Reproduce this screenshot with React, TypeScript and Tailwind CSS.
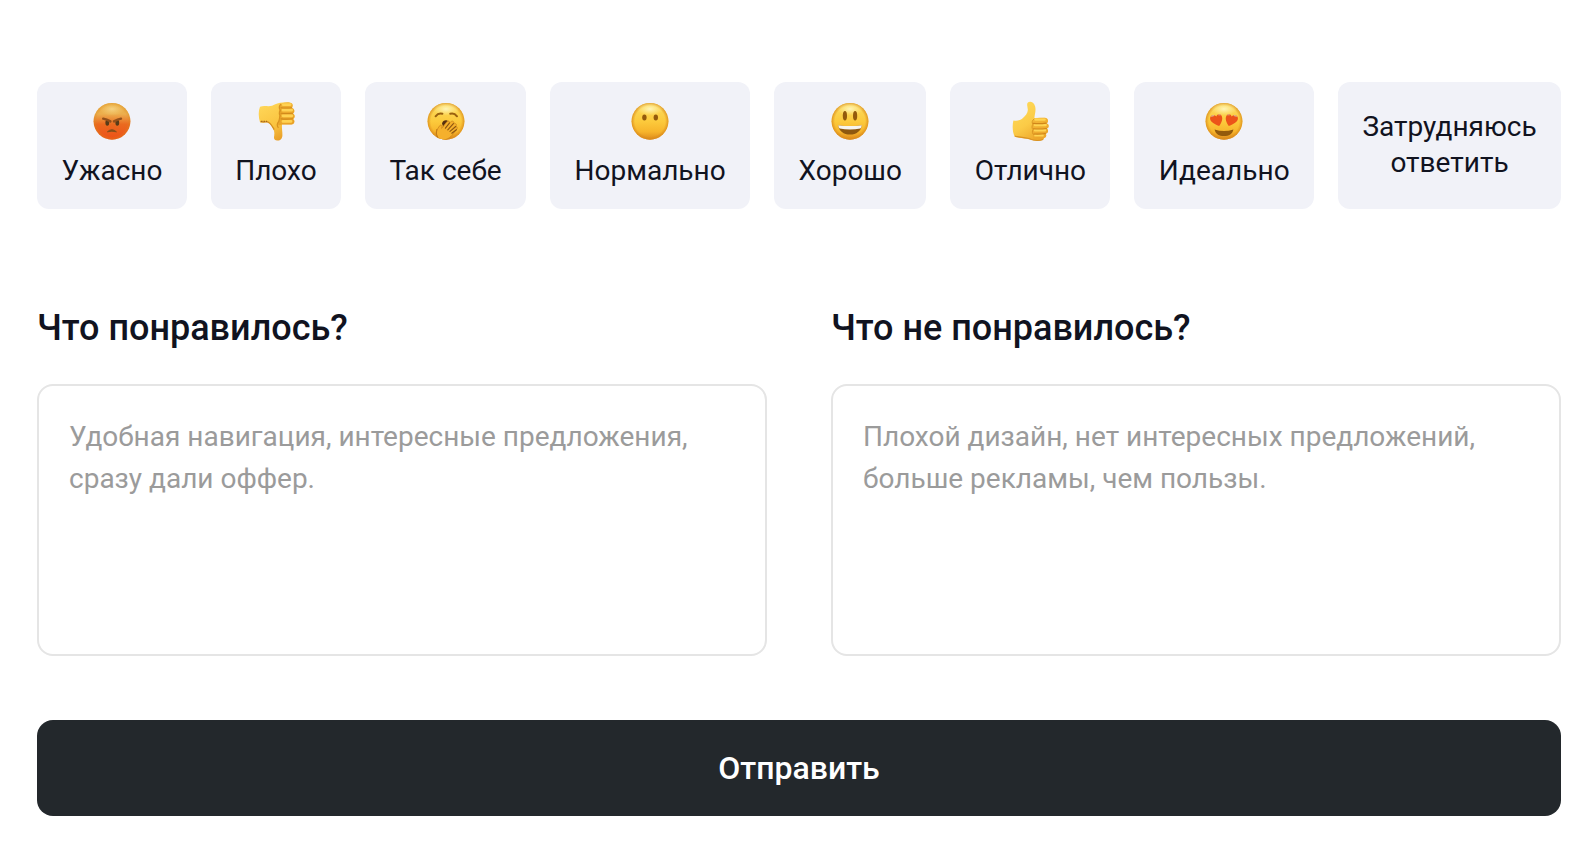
import { useId, type ReactNode } from "react";

function Face({ children, angry = false }: { children: ReactNode; angry?: boolean }) {
  const id = useId();
  const clip = `${id}-clip`;
  return (
    <svg viewBox="0 0 40 40" className="size-10" aria-hidden="true">
      <defs>
        <linearGradient id={id} x1="0" y1="0" x2="0" y2="1">
          {angry ? (
            <>
              <stop offset="0" stopColor="#e9a83c" />
              <stop offset="0.3" stopColor="#ecaf4e" />
              <stop offset="0.58" stopColor="#ea6a20" />
              <stop offset="1" stopColor="#ee4f17" />
            </>
          ) : (
            <>
              <stop offset="0" stopColor="#fbdc62" />
              <stop offset="0.5" stopColor="#fcca3c" />
              <stop offset="0.78" stopColor="#f7b52c" />
              <stop offset="1" stopColor="#dd8a1c" />
            </>
          )}
        </linearGradient>
        <radialGradient id={`${id}-edge`}>
          <stop offset="0.82" stopColor="#d98a1b" stopOpacity="0" />
          <stop offset="1" stopColor="#d98a1b" stopOpacity={angry ? "0.4" : "0.8"} />
        </radialGradient>
        <radialGradient id={`${id}-shine`}>
          <stop offset="0" stopColor="#fff6bd" stopOpacity={angry ? "0.5" : "0.95"} />
          <stop offset="1" stopColor="#fff0a0" stopOpacity="0" />
        </radialGradient>
        <clipPath id={clip}>
          <circle cx="20" cy="20.3" r="18.4" />
        </clipPath>
      </defs>
      <circle cx="20" cy="20.3" r="18.4" fill={`url(#${id})`} />
      <circle cx="20" cy="20.3" r="18.4" fill={`url(#${id}-edge)`} />
      <ellipse cx="20" cy="8" rx="13" ry="6.5" fill={`url(#${id}-shine)`} />
      <g clipPath={`url(#${clip})`}>{children}</g>
    </svg>
  );
}

function Angry() {
  return (
    <Face angry>
      <ellipse cx="15.3" cy="21.7" rx="1.9" ry="3" fill="#573b18" />
      <ellipse cx="25.3" cy="21.7" rx="1.9" ry="3" fill="#573b18" />
      <path d="M11.2 17.6Q14.5 18.2 18.4 20.4M29 17.6Q25.8 18.2 22 20.4" fill="none" stroke="#94501a" strokeWidth="2.4" strokeLinecap="round" />
      <path d="M15.4 30.8Q19.9 26.6 24.4 30.8Q19.9 29.6 15.4 30.8Z" fill="#87501a" stroke="#87501a" strokeLinejoin="round" />
    </Face>
  );
}

function Yawning() {
  return (
    <Face>
      <path d="M9.6 15.3Q12.4 11.6 16.4 12.8M24.2 12.8Q28.2 11.6 31 15.3" fill="none" stroke="#9a610f" strokeWidth="2" strokeLinecap="round" />
      <path d="M16 22.5C16.5 19.6 19 19 21 19.4C23.5 20 24 22 23 25L17.5 26.5Z" fill="#573010" />
      <path
        d="M13 39C9.5 35 9.8 30.5 12 27.2L13.8 24.6C14.8 23.4 16.4 24.3 16 25.8L15.6 27.4L21 20.6C22.4 19.2 24.2 20.6 23.4 22.1L25.4 20.4C27 19.5 28.6 21.2 27.5 22.6L28.6 22.4C30.4 22.4 31 24.2 29.8 25.4C31.6 25.7 31.6 27.6 30.4 28.6L27.4 32.6C24.5 37 19.5 40 13 39Z"
        fill="#f5b02c"
        stroke="#c9821a"
        strokeWidth="0.7"
      />
      <path d="M19.4 27.2L23.4 22.1M21.8 28.8L27.4 22.7M24 30.4L29.7 25.5M25.8 32.2L30.4 28.7" fill="none" stroke="#8a5411" strokeWidth="1.1" strokeLinecap="round" />
      <path d="M11 28C9.6 32 10.5 35 13.5 38.6" fill="none" stroke="#b97216" strokeWidth="0.9" />
    </Face>
  );
}

function NoMouth() {
  return (
    <Face>
      <ellipse cx="14.4" cy="16.6" rx="2.2" ry="3" fill="#935a0c" />
      <ellipse cx="25.8" cy="16.6" rx="2.2" ry="3" fill="#935a0c" />
    </Face>
  );
}

function Smiley() {
  return (
    <Face>
      <ellipse cx="14.9" cy="14.8" rx="2.1" ry="4.8" fill="#935a0c" />
      <ellipse cx="25.1" cy="14.8" rx="2.1" ry="4.8" fill="#935a0c" />
      <path d="M8.2 24.2Q20 26 31.8 24.2C31 30 26.4 33.6 20 33.6C13.6 33.6 9 30 8.2 24.2Z" fill="#8e580f" />
      <path d="M8.2 24.2Q20 26 31.8 24.2Q31.5 26.4 30.4 27.6Q20 29.6 9.6 27.6Q8.5 26.4 8.2 24.2Z" fill="#f6f4ee" />
    </Face>
  );
}

function HeartEyes() {
  return (
    <Face>
      <path d="M17.4 14.5C16 12.4 13 13 12.4 15.4C10.6 13.4 7 13.8 6.2 16.4C5.2 20 9.6 22.6 15.2 25C17.6 21.8 19.4 17.4 17.4 14.5Z" fill="#ec5419" />
      <path d="M22.6 14.5C24 12.4 27 13 27.6 15.4C29.4 13.4 33 13.8 33.8 16.4C34.8 20 30.4 22.6 24.8 25C22.4 21.8 20.6 17.4 22.6 14.5Z" fill="#ec5419" />
      <path d="M7.4 15.6Q8.6 14.2 10.2 14.8M14.4 14.2Q15.4 13.2 16.6 14.2M23.4 14.2Q24.6 13.2 25.6 14.2M29.8 14.8Q31.4 14.2 32.6 15.6" fill="none" stroke="#ddb18c" strokeWidth="1.1" />
      <path d="M10.6 28.4Q20 31.4 29.4 28.4C28.6 32.8 25 35 20 35C15 35 11.4 32.8 10.6 28.4Z" fill="#935a0c" />
    </Face>
  );
}

function ThumbUp() {
  const id = useId();
  return (
    <svg viewBox="0 0 40 40" className="size-10" aria-hidden="true">
      <defs>
        <linearGradient id={id} x1="0" y1="0" x2="0.6" y2="1">
          <stop offset="0" stopColor="#ffdb5c" />
          <stop offset="0.6" stopColor="#fbcb47" />
          <stop offset="1" stopColor="#eda72b" />
        </linearGradient>
      </defs>
      <path
        d="M3.4 19.4C7 20 10 19.6 12.4 17.6C15.5 14.8 18 12 17.8 8.6L17.2 4.4C16.8 1.8 18.4 .6 20.4 .8C23.6 1 25.4 4.4 25.5 8C25.6 11.2 24.6 14 24.4 17L34.6 16.8C38.6 17 39 21.4 36.4 22.2C39.6 23 39.2 27 36.6 27.6C39 28.6 38.4 32.4 35.6 32.6C37 34.6 36 36.6 34 37L33.4 38.6C31.5 40.2 24 39.8 21 38.8C15 36.8 9 37.8 4.6 35.4C2.4 31 2.2 24 3.4 19.4Z"
        fill={`url(#${id})`}
      />
      <path d="M24.2 18C22 20 22 22 23 23.2C21.4 25 22 27.4 23.2 28.4C22 30 22.4 32.4 23.8 33.2C22.6 35 23 37.4 24.4 38.8C29 39.8 32 39.4 33.4 38.6L34 37C36 36.6 37 34.6 35.6 32.6C38.4 32.4 39 28.6 36.6 27.6C39.2 27 39.6 23 36.4 22.2C39 21.4 38.6 17 34.6 16.8C31 16.6 27 16.6 24.2 18Z" fill="#eda629" fillOpacity="0.55" />
      <path d="M25.5 18.6H34.6M25 24H35.6M25 29.2H35M25.4 34.4H32.6" fill="none" stroke="#ffd452" strokeWidth="2.4" strokeLinecap="round" />
      <path d="M23.4 22.4Q30 23 36.2 22.1M23.4 27.8Q30 28.4 36.4 27.5M23.8 33Q30 33.4 35.4 32.5" fill="none" stroke="#d0861a" strokeWidth="1.1" strokeLinecap="round" />
      <path d="M24.2 17.8C21.8 19.4 21.8 22 22.8 23.2C21.6 25.4 21.8 27.4 23 28.6C22 30.4 22.2 32.4 23.4 33.6" fill="none" stroke="#d89220" strokeWidth="0.9" />
      <path d="M4.8 34.9C9 36.8 16 36 21.4 38.4C25 39.6 30 39.6 33 38.4" fill="none" stroke="#d99324" strokeWidth="1.1" />
    </svg>
  );
}

function ThumbDown() {
  const id = useId();
  return (
    <svg viewBox="0 0 40 40" className="size-10" aria-hidden="true">
      <defs>
        <linearGradient id={id} x1="0" y1="0" x2="0.5" y2="1">
          <stop offset="0" stopColor="#ffd95c" />
          <stop offset="0.65" stopColor="#fac440" />
          <stop offset="1" stopColor="#e9a02a" />
        </linearGradient>
      </defs>
      <path
        d="M4 5.8C8 4.2 12 6 16 4.8C19.6 3.4 23 1.6 27 1.6C30 1 34.4 .8 36 2.6C37.2 4.2 36.8 6 35.6 7C38.6 7.2 39.4 11.4 36.8 12.4C39.4 13.2 39.2 17.4 36.8 18C39.4 19 38.8 23.4 35.4 23.6L26 23.4C25.6 27 26.6 31 26.4 34.4C26.2 38 24 39.6 21 39.6C18.2 39.2 17.6 37.2 18.2 34.8C18.8 31.2 18 28.8 15.8 25.6C14 22.4 12.4 21 9.6 21.2C7.4 21.4 5.6 21.8 4 21.2C2.4 16 2.2 10 4 5.8Z"
        fill={`url(#${id})`}
      />
      <path d="M27 2C24 3 23 5.4 24 7.6C22.4 9.6 22.6 12 23.8 13.2C22.4 15 22.8 17.4 24 18.6C22 20 21 22 22.4 24.4L26 23.4L35.4 23.6C38.8 23.4 39.4 19 36.8 18C39.2 17.4 39.4 13.2 36.8 12.4C39.4 11.4 38.6 7.2 35.6 7C36.8 6 37.2 4.2 36 2.6C34 1 30 1.2 27 2Z" fill="#e3961f" fillOpacity="0.65" />
      <path d="M27 3.6H34.2M27 9.2H35.6M27 14.8H35.8M27 20.4H35" fill="none" stroke="#ffd252" strokeWidth="2.8" strokeLinecap="round" />
      <path d="M25 6.7Q30 7.4 35.8 6.7M25 12.3Q31 12.8 36.6 12.2M25 17.9Q31 18.4 36.6 17.8" fill="none" stroke="#d28a1b" strokeWidth="1.1" strokeLinecap="round" />
      <path d="M25 3C22.4 5.4 23.4 8 24.4 9.4C23 11.4 23.2 13.4 24.2 14.8C23.2 17 23.6 19 22.6 20.6C20.6 23 21 25 22.4 26.8" fill="none" stroke="#d89220" strokeWidth="1.2" />
      <path d="M4.4 20.6Q7 21.4 11 20.7C14.6 21.6 16 25 18.2 28.6" fill="none" stroke="#d48f22" strokeWidth="1.2" />
      <path d="M5 20.4H11" fill="none" stroke="#a9691a" strokeWidth="1.2" strokeDasharray="1.5 1" />
    </svg>
  );
}

const ratings: { label: string; icon?: ReactNode }[] = [
  { label: "Ужасно", icon: <Angry /> },
  { label: "Плохо", icon: <ThumbDown /> },
  { label: "Так себе", icon: <Yawning /> },
  { label: "Нормально", icon: <NoMouth /> },
  { label: "Хорошо", icon: <Smiley /> },
  { label: "Отлично", icon: <ThumbUp /> },
  { label: "Идеально", icon: <HeartEyes /> },
  { label: "Затрудняюсь ответить" },
];

const questions = [
  { id: "liked", title: "Что понравилось?", hint: "Удобная навигация, интересные предложения, сразу дали оффер." },
  { id: "disliked", title: "Что не понравилось?", hint: "Плохой дизайн, нет интересных предложений, больше рекламы, чем пользы." },
];

export default function App() {
  return (
    <form
      onSubmit={(e) => e.preventDefault()}
      className="bg-white pt-[82px] pr-[29px] pb-[34px] pl-[37px] font-['Roboto',sans-serif] text-[28px] text-[#11131f]"
    >
      <div className="flex gap-6">
        {ratings.map(({ label, icon }) => (
          <button
            key={label}
            type="button"
            className="flex flex-auto flex-col items-center justify-center gap-3 rounded-xl bg-[#f1f2f8] px-6 pt-[19px] pb-5 leading-9"
          >
            {icon}
            <span className={icon ? "whitespace-nowrap" : "w-min"}>{label}</span>
          </button>
        ))}
      </div>

      <div className="mt-[98px] grid grid-cols-2 gap-16">
        {questions.map(({ id, title, hint }) => (
          <div key={id} className="flex flex-col gap-[35px]">
            <label htmlFor={id} className="text-[36px] leading-[42px] font-medium">
              {title}
            </label>
            <textarea
              id={id}
              placeholder={hint}
              className="block h-[272px] w-full resize-none rounded-2xl border-2 border-[#e5e5e5] bg-white p-[30px] leading-[42px] outline-none placeholder:text-[#9b9b9b]"
            />
          </div>
        ))}
      </div>

      <button type="submit" className="mt-16 w-full rounded-2xl bg-[#23282c] py-7 text-[32px] leading-10 font-medium text-white">
        Отправить
      </button>
    </form>
  );
}
